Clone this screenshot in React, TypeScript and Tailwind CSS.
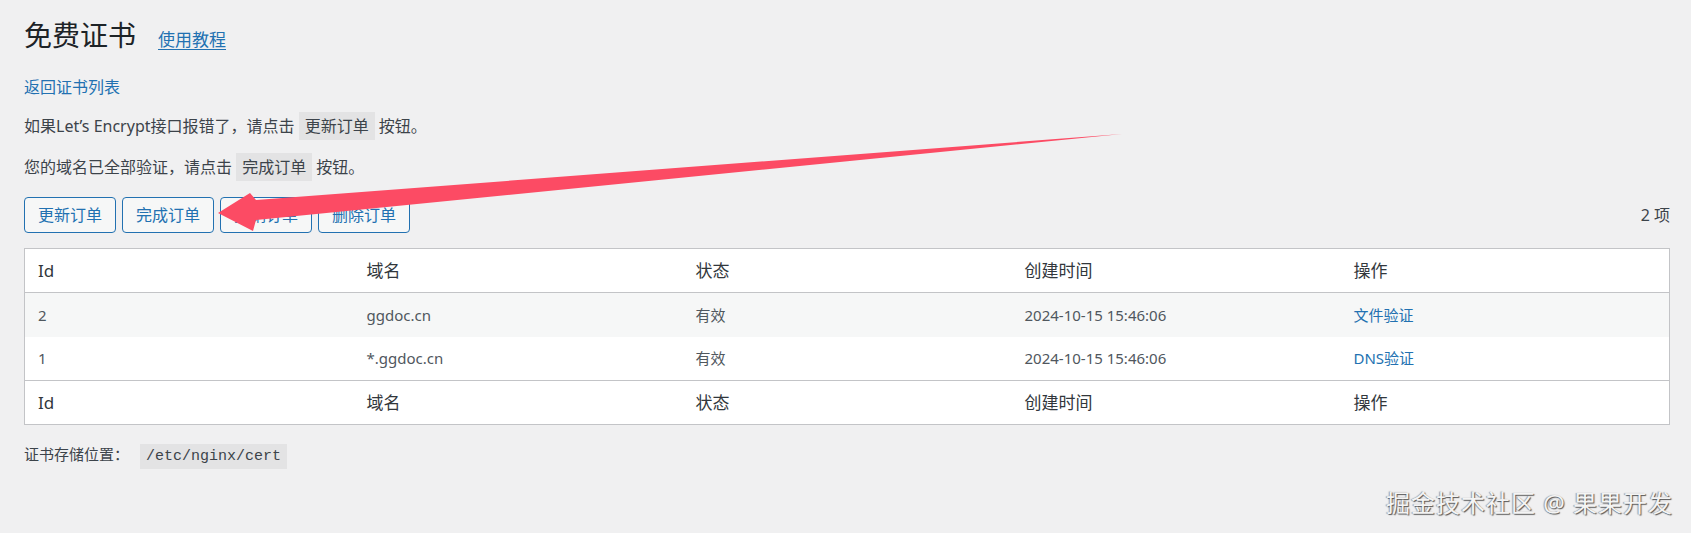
// 免费证书 订单详情页

const rows = [
  { id: '2', domain: 'ggdoc.cn', status: '有效', created: '2024-10-15 15:46:06', action: '文件验证' },
  { id: '1', domain: '*.ggdoc.cn', status: '有效', created: '2024-10-15 15:46:06', action: 'DNS验证' },
];

const heads = ['Id', '域名', '状态', '创建时间', '操作'];

function Code({ children }: { children: string }) {
  return <code className="bg-[#e3e3e4] px-[6px] py-[3px] font-['Noto_Sans','Noto_Sans_CJK_SC',sans-serif]">{children}</code>;
}

function OrderButton({ label }: { label: string }) {
  return (
    <button className="h-[36px] w-[92px] rounded-[4px] border border-[#2271b1] bg-[#f6f7f7] text-[16px] text-[#2271b1]">
      {label}
    </button>
  );
}

export default function App() {
  return (
    <div className="relative h-[533px] w-full overflow-hidden bg-[#f0f0f1] font-['Noto_Sans','Noto_Sans_CJK_SC',sans-serif] text-[#3c434a]">
      <div className="flex flex-col pl-[24px] pr-[21px] pt-[17px]">
        {/* 标题 */}
        <div className="flex items-baseline">
          <h1 className="text-[28px] leading-[36px] font-normal text-[#1d2327]">免费证书</h1>
          <a className="ml-[22px] text-[17px] text-[#2271b1] underline underline-offset-[3px]">使用教程</a>
        </div>

        <a className="mt-[22px] text-[16px] leading-[24px] text-[#2271b1]">返回证书列表</a>

        <p className="mt-[15px] text-[16px] leading-[24px]">
          如果Let’s Encrypt接口报错了，请点击 <Code>更新订单</Code> 按钮。
        </p>
        <p className="mt-[17px] text-[16px] leading-[24px]">
          您的域名已全部验证，请点击 <Code>完成订单</Code> 按钮。
        </p>

        {/* 按钮 */}
        <div className="mt-[18px] flex items-center justify-between">
          <div className="flex gap-[6px]">
            <OrderButton label="更新订单" />
            <OrderButton label="完成订单" />
            <OrderButton label="撤销订单" />
            <OrderButton label="删除订单" />
          </div>
          <span className="text-[16px]">2 项</span>
        </div>

        {/* 表格 */}
        <table className="mt-[15px] w-full table-fixed border border-[#c3c4c7] bg-white">
          <thead>
            <tr className="h-[44px] border-b border-[#c3c4c7]">
              {heads.map((h) => (
                <th key={h} className="pl-[13px] text-left text-[17px] font-normal text-[#32373c]">{h}</th>
              ))}
            </tr>
          </thead>
          <tbody>
            {rows.map((r, i) => (
              <tr key={r.id} className={`h-[44px] text-[15px] text-[#50575e] ${i % 2 === 0 ? 'bg-[#f6f7f7]' : 'bg-white'}`}>
                <td className="pl-[13px]">{r.id}</td>
                <td className="pl-[13px]">{r.domain}</td>
                <td className="pl-[13px]">{r.status}</td>
                <td className="pl-[13px]">{r.created}</td>
                <td className="pl-[13px] text-[#2271b1]">{r.action}</td>
              </tr>
            ))}
          </tbody>
          <tfoot>
            <tr className="h-[44px] border-t border-[#c3c4c7]">
              {heads.map((h) => (
                <th key={h} className="pl-[13px] text-left text-[17px] font-normal text-[#32373c]">{h}</th>
              ))}
            </tr>
          </tfoot>
        </table>

        <p className="mt-[16px] text-[15px] leading-[26px]">
          证书存储位置：
          <code className="ml-[11px] bg-[#e3e3e4] px-[6px] py-[4px] font-['Liberation_Mono',monospace] text-[15px] text-[#3c434a]">/etc/nginx/cert</code>
        </p>
      </div>

      {/* 标注箭头 */}
      <svg className="pointer-events-none absolute left-0 top-0" width="1691" height="533" viewBox="0 0 1691 533">
        <polygon points="218,213 250,193 256,200 1122,134 256,220 253,231" fill="#fc4b64" />
      </svg>

      {/* 水印 */}
      <div className="absolute right-[18px] top-[488px] text-[24px] leading-[30px] tracking-[1px] text-[#f4f4f4] [text-shadow:1px_1px_1px_#555,-1px_0_1px_#999]">
        掘金技术社区 @ 果果开发
      </div>
    </div>
  );
}
